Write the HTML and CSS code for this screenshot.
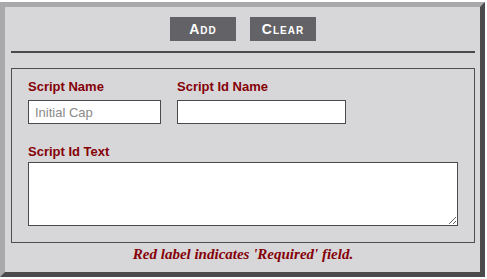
FILE: index.html
```html
<!DOCTYPE html>
<html lang="en">

<head>
    <meta charset="UTF-8" />
    <meta name="viewport" content="width=device-width, initial-scale=1.0" />
    <link rel="stylesheet" href="styles.css">
    <title>Script</title>
</head>

<body>
    <section class="panel">
        <div class="toolbar">
            <button type="button" class="btn add">Add</button>
            <button type="button" class="btn clear">Clear</button>
        </div>
        <hr class="divider" />
        <div class="fields">
            <div class="row">
                <div class="field name">
                    <label class="required" for="scriptName">Script Name</label>
                    <input type="text" id="scriptName" placeholder="Initial Cap" />
                </div>
                <div class="field id-name">
                    <label class="required" for="scriptIdName">Script Id Name</label>
                    <input type="text" id="scriptIdName" />
                </div>
            </div>
            <div class="field text">
                <label class="required" for="scriptIdText">Script Id Text</label>
                <textarea id="scriptIdText"></textarea>
            </div>
        </div>
        <p class="note">Red label indicates 'Required' field.</p>
    </section>
</body>

</html>
```

FILE: styles.css
```css
* {
    margin: 0;
    padding: 0;
    box-sizing: border-box;
    font-family: "Liberation Sans", Arial, sans-serif;
}

body {
    background-color: #ffffff;
    padding-top: 2px;
}

section.panel {
    width: 485px;
    height: 275px;
    background-color: #d7d7d9;
    border: 5px solid;
    border-color: #a9a9ab #4b4b4d #4b4b4d #a9a9ab;
    padding: 10px 5px 0 6px;
}

.toolbar {
    display: flex;
    justify-content: center;
    gap: 14px;
}

.btn {
    width: 66px;
    height: 24px;
    border: none;
    background-color: #636266;
    color: #ffffff;
    font-size: 14px;
    font-weight: bold;
    font-variant: small-caps;
    letter-spacing: 1px;
}

hr.divider {
    border: none;
    height: 2px;
    background-color: #4a4a4c;
    margin-top: 10px;
}

.fields {
    margin-top: 15px;
    border: 1px solid #4e4e50;
    height: 175px;
    padding: 10px 16px 0 16px;
}

.row {
    display: flex;
    gap: 16px;
}

.field label {
    display: block;
    color: #850007;
    font-size: 13px;
    font-weight: bold;
    line-height: 15px;
}

.field input {
    display: block;
    height: 24px;
    margin-top: 6px;
    border: 1px solid #4a4a4a;
    background-color: #ffffff;
    font-size: 13px;
    padding: 0 6px;
    outline: none;
}

.field input::placeholder {
    color: #8a8a8a;
}

.name input {
    width: 133px;
}

.id-name input {
    width: 169px;
}

.field.text {
    margin-top: 20px;
}

.field textarea {
    display: block;
    width: 430px;
    height: 64px;
    margin-top: 3px;
    border: 1px solid #4a4a4a;
    background-color: #ffffff;
    outline: none;
}

.note {
    text-align: center;
    font-family: "Liberation Serif", "Times New Roman", serif;
    font-style: italic;
    font-weight: bold;
    font-size: 15px;
    color: #850007;
    margin-top: 3px;
}
```
